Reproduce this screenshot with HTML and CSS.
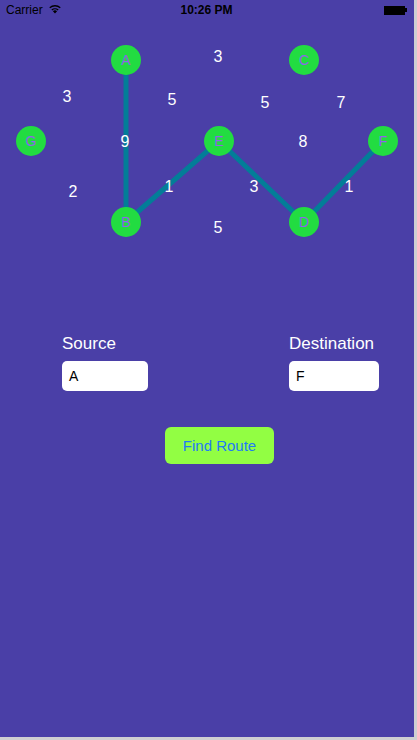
FILE: index.html
```html
<!DOCTYPE html>
<html>
<head>
<meta charset="utf-8">
<link rel="stylesheet" href="styles.css">
</head>
<body>
<div class="screen">
  <div class="statusbar">
    <div class="sb-left">
      <span class="carrier">Carrier</span>
      <svg class="wifi" width="14" height="10" viewBox="0 0 14 10">
        <path d="M7 9.6 L4.9 7.2 A3.2 3.2 0 0 1 9.1 7.2 Z" fill="#000"/>
        <path d="M3.4 5.6 A5.3 5.3 0 0 1 10.6 5.6 L9.7 6.6 A4 4 0 0 0 4.3 6.6 Z" fill="#000"/>
        <path d="M1.3 3.3 A8.3 8.3 0 0 1 12.7 3.3 L11.8 4.3 A7 7 0 0 0 2.2 4.3 Z" fill="#000"/>
      </svg>
    </div>
    <div class="time">10:26 PM</div>
    <div class="sb-right">
      <div class="battery"><div class="battery-body"></div><div class="battery-nub"></div></div>
    </div>
  </div>

  <svg class="graph" width="414" height="240" viewBox="0 20 414 240">
    <g stroke="#037d98" stroke-width="5" stroke-linecap="butt">
      <line x1="126" y1="60" x2="126" y2="222"/>
      <line x1="126" y1="222" x2="219" y2="141"/>
      <line x1="219" y1="141" x2="304" y2="222"/>
      <line x1="304" y1="222" x2="383" y2="141"/>
    </g>
    <g class="weights" fill="#fff" font-size="16" text-anchor="middle">
      <text x="67" y="102">3</text>
      <text x="218" y="62">3</text>
      <text x="172" y="105">5</text>
      <text x="265" y="108">5</text>
      <text x="341" y="108">7</text>
      <text x="125" y="147">9</text>
      <text x="303" y="147">8</text>
      <text x="73" y="197">2</text>
      <text x="169" y="192">1</text>
      <text x="254" y="192">3</text>
      <text x="349" y="192">1</text>
      <text x="218" y="233">5</text>
    </g>
    <g class="nodes">
      <circle cx="126" cy="60" r="15" fill="#22dc41"/>
      <circle cx="304" cy="60" r="15" fill="#22dc41"/>
      <circle cx="31" cy="141" r="15" fill="#22dc41"/>
      <circle cx="219" cy="141" r="15" fill="#22dc41"/>
      <circle cx="383" cy="141" r="15" fill="#22dc41"/>
      <circle cx="126" cy="222" r="15" fill="#22dc41"/>
      <circle cx="304" cy="222" r="15" fill="#22dc41"/>
    </g>
    <g class="labels" fill="#8f63ec" font-size="14" text-anchor="middle">
      <text x="126" y="65">A</text>
      <text x="304" y="65">C</text>
      <text x="31" y="146">G</text>
      <text x="219" y="146">E</text>
      <text x="383" y="146">F</text>
      <text x="126" y="227">B</text>
      <text x="304" y="227">D</text>
    </g>
  </svg>

  <div class="form">
    <div class="field">
      <div class="label">Source</div>
      <div class="input src">A</div>
    </div>
    <div class="field">
      <div class="label">Destination</div>
      <div class="input dst">F</div>
    </div>
  </div>

  <div class="actions">
    <div class="button">Find Route</div>
  </div>
</div>
</body>
</html>
```

FILE: styles.css
```css
html, body {
  margin: 0;
  padding: 0;
}
body {
  background: #cfcfd2;
  width: 417px;
  height: 740px;
  overflow: hidden;
  font-family: "Liberation Sans", Arial, sans-serif;
}
.screen {
  width: 414px;
  height: 737px;
  background: #4a3fa7;
  display: flex;
  flex-direction: column;
}
.statusbar {
  height: 20px;
  display: flex;
  align-items: center;
  justify-content: space-between;
  font-size: 12px;
  color: #000;
}
.sb-left {
  display: flex;
  align-items: center;
  gap: 5px;
  padding-left: 6px;
  width: 120px;
}
.carrier {
  font-size: 12px;
}
.wifi {
  margin-top: -2px;
}
.time {
  font-weight: bold;
  font-size: 12px;
}
.sb-right {
  width: 120px;
  display: flex;
  justify-content: flex-end;
  padding-right: 7px;
}
.battery {
  display: flex;
  align-items: center;
}
.battery-body {
  width: 21px;
  height: 9px;
  background: #000;
}
.battery-nub {
  width: 2px;
  height: 4px;
  background: #000;
}
.graph {
  display: block;
  font-family: "Liberation Sans", Arial, sans-serif;
}
.form {
  display: flex;
  justify-content: space-between;
  padding: 74px 35px 0 62px;
}
.field {
  display: flex;
  flex-direction: column;
}
.label {
  color: #fff;
  font-size: 17px;
  line-height: 20px;
  height: 20px;
  margin-bottom: 7px;
}
.input {
  height: 30px;
  background: #fff;
  border-radius: 5px;
  box-sizing: border-box;
  padding-left: 7px;
  font-size: 14px;
  line-height: 30px;
  color: #000;
}
.input.src { width: 86px; }
.input.dst { width: 90px; }
.actions {
  display: flex;
  padding: 36px 0 0 165px;
}
.button {
  width: 109px;
  height: 37px;
  background: #92fe43;
  border-radius: 6px;
  color: #1f7bf6;
  font-size: 15px;
  line-height: 37px;
  text-align: center;
}
```
